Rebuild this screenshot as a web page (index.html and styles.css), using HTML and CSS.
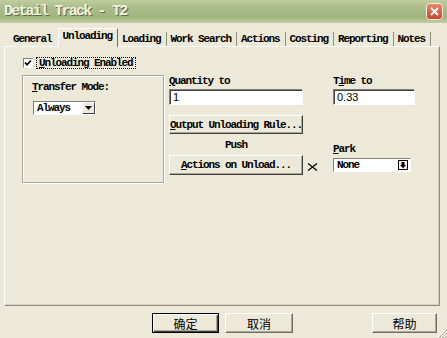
FILE: index.html
```html
<!DOCTYPE html>
<html lang="en">
<head>
    <meta charset="UTF-8">
    <title>Detail Track - T2</title>
    <link rel="stylesheet" href="styles.css">
</head>
<body>
    <div class="titlebar">
        <span class="title">Detail Track - T2</span>
        <svg class="close" width="17" height="17" viewBox="0 0 17 17">
            <defs>
                <linearGradient id="closeGrad" x1="0" y1="0" x2="0" y2="1">
                    <stop offset="0" stop-color="#e98a6b"/>
                    <stop offset="1" stop-color="#c9442b"/>
                </linearGradient>
            </defs>
            <rect x="0.5" y="0.5" width="16" height="16" rx="3" fill="url(#closeGrad)" stroke="#f1eee2"/>
            <path d="M5 5 L12 12 M12 5 L5 12" stroke="#fff" stroke-width="2"/>
        </svg>
    </div>
    <div class="client">
        <div class="tabs">
            <span class="tab first">General</span>
            <span class="tab active">Unloading</span>
            <span class="tab">Loading</span>
            <span class="tab">Work Search</span>
            <span class="tab">Actions</span>
            <span class="tab">Costing</span>
            <span class="tab">Reporting</span>
            <span class="tab">Notes</span>
        </div>
        <div class="panel">
            <div class="check-row">
                <span class="checkbox">
                    <svg width="8" height="8" viewBox="0 0 8 8"><path d="M1 3.5 L3 5.8 L7 1.5" fill="none" stroke="#000" stroke-width="1.7"/></svg>
                </span>
                <span class="focus"><u>U</u>nloading Enabled</span>
            </div>
            <div class="main">
                <div class="group">
                    <div class="label"><u>T</u>ransfer Mode:</div>
                    <div class="combo">
                        <span class="combo-text">Always</span>
                        <span class="combo-btn">
                            <svg width="7" height="4" viewBox="0 0 7 4"><path d="M0 0 H7 L3.5 4 Z" fill="#000"/></svg>
                        </span>
                    </div>
                </div>
                <div class="fields">
                    <div class="label"><u>Q</u>uantity to</div>
                    <div></div>
                    <div class="label">T<u>i</u>me to</div>

                    <div class="input">1</div>
                    <div></div>
                    <div class="input">0.33</div>

                    <button class="btn rule"><u>O</u>utput Unloading Rule...</button>
                    <div></div>
                    <div></div>

                    <div class="label push">Push</div>
                    <div></div>
                    <div class="label park"><u>P</u>ark</div>

                    <button class="btn unload"><u>A</u>ctions on Unload...</button>
                    <svg class="clear" width="11" height="8" viewBox="0 0 11 8"><path d="M1 0.5 L10 7.5 M10 0.5 L1 7.5" stroke="#000" stroke-width="1.2"/></svg>
                    <div class="select">
                        <span class="combo-text">None</span>
                        <svg class="select-icon" width="10" height="10" viewBox="0 0 10 10">
                            <rect x="0.5" y="0.5" width="9" height="9" fill="#f4f2ea" stroke="#000"/>
                            <path d="M3.5 2 H6.5 V5 H8 L5 8.2 L2 5 H3.5 Z" fill="#000"/>
                        </svg>
                    </div>
                </div>
            </div>
        </div>
        <div class="actions">
            <button class="btn cjk default">确定</button>
            <button class="btn cjk">取消</button>
            <button class="btn cjk help">帮助</button>
        </div>
    </div>
    <svg class="grip" width="11" height="11" viewBox="0 0 11 11">
        <path d="M10 2 L2 10 M10 5 L5 10 M10 8 L8 10" stroke="#fff" stroke-width="1"/>
        <path d="M11 3 L3 11 M11 6 L6 11 M11 9 L9 11" stroke="#aca899" stroke-width="1"/>
    </svg>
</body>
</html>
```

FILE: styles.css
```css
body {
    margin: 0;
    width: 447px;
    height: 338px;
    overflow: hidden;
    position: relative;
    background-color: #ece9d8;
    font: bold 11px "Liberation Mono", monospace;
    letter-spacing: -1.1px;
    color: #000;
}
.titlebar {
    height: 23px;
    box-sizing: border-box;
    display: flex;
    align-items: center;
    justify-content: space-between;
    padding: 0 4px 0 4px;
    background: linear-gradient(#bfcd9f, #aabd89 35%, #a0b57d 75%, #c3cfa7);
}
.title {
    font: bold 15px "Liberation Mono", monospace;
    letter-spacing: -1.8px;
    color: #f3f1de;
    text-shadow: 1px 1px 0 #5d6c44;
}
.client {
    padding: 4px 7px 0 4px;
}
.tabs {
    display: flex;
    align-items: flex-end;
    height: 19px;
    padding-left: 6px;
}
.tab {
    height: 14px;
    line-height: 14px;
    padding: 0 5px 0 4px;
    border-right: 1px solid #8f8d80;
    white-space: nowrap;
}
.tab.first {
    border-right: none;
    padding: 0 6px 0 3px;
}
.tab.active {
    height: 19px;
    line-height: 14px;
    box-sizing: border-box;
    padding: 0 5px 0 4px;
    margin-bottom: -1px;
    border-left: 1px solid #fff;
    border-top: 1px solid #fff;
    border-right: 1px solid #716f64;
    background-color: #ece9d8;
    position: relative;
    z-index: 1;
}
.panel {
    width: 436px;
    height: 260px;
    box-sizing: border-box;
    border: 1px solid;
    border-color: #fff #8f8d80 #8f8d80 #fff;
    box-shadow: inset -1px -1px 0 #d6d2c2;
    padding: 10px 0 0 17px;
}
.check-row {
    display: flex;
    align-items: center;
    height: 11px;
}
.checkbox {
    width: 10px;
    height: 10px;
    box-sizing: border-box;
    margin-left: 1px;
    border: 1px solid;
    border-color: #808080 #fff #fff #808080;
    background-color: #fff;
    display: flex;
    align-items: center;
    justify-content: center;
}
.focus {
    margin-left: 4px;
    padding: 0 2px;
    line-height: 10px;
    outline: 1px dotted #000;
}
.main {
    display: flex;
    margin-top: 7px;
}
.group {
    width: 142px;
    height: 108px;
    box-sizing: border-box;
    border: 1px solid #aca899;
    box-shadow: inset 1px 1px 0 #fff, 1px 1px 0 #fff;
    padding: 5px 0 0 9px;
}
.label {
    line-height: 12px;
    height: 12px;
    white-space: nowrap;
}
.combo {
    margin: 8px 0 0 1px;
    width: 63px;
    height: 14px;
    box-sizing: border-box;
    display: flex;
    align-items: center;
    justify-content: space-between;
    border: 1px solid;
    border-color: #808080 #fff #fff #808080;
    background-color: #fff;
}
.combo-text {
    padding-left: 3px;
    line-height: 12px;
}
.combo-btn {
    width: 13px;
    height: 12px;
    box-sizing: border-box;
    display: flex;
    align-items: center;
    justify-content: center;
    background-color: #ece9d8;
    border: 1px solid;
    border-color: #fff #404040 #404040 #fff;
}
.fields {
    display: grid;
    grid-template-columns: 134px 30px 82px;
    margin-left: 5px;
    align-content: start;
}
.input {
    margin-top: 2px;
    height: 16px;
    box-sizing: border-box;
    border: 1px solid;
    border-color: #808080 #fff #fff #808080;
    box-shadow: inset 1px 1px 0 #404040;
    background-color: #fff;
    padding: 1px 0 0 3px;
    font: 11px "Liberation Sans", sans-serif;
    letter-spacing: 0;
    line-height: 13px;
}
.btn {
    font: inherit;
    letter-spacing: inherit;
    white-space: nowrap;
    color: #000;
    background-color: #ece9d8;
    border: 1px solid;
    border-color: #fff #404040 #404040 #fff;
    box-shadow: inset -1px -1px 0 #aca899;
    padding: 0;
    margin: 0;
}
.btn.rule {
    margin-top: 10px;
    height: 19px;
}
.push {
    margin-top: 5px;
    text-align: center;
}
.park {
    margin-top: 9px;
}
.btn.unload {
    height: 20px;
}
.clear {
    align-self: center;
    margin: 4px 0 0 4px;
}
.select {
    align-self: center;
    width: 78px;
    height: 14px;
    box-sizing: border-box;
    display: flex;
    align-items: center;
    justify-content: space-between;
    padding-right: 2px;
    border: 1px solid;
    border-color: #808080 #fff #fff #808080;
    background-color: #fff;
}
.actions {
    display: flex;
    padding: 7px 3px 0 148px;
}
.btn.cjk {
    width: 68px;
    height: 20px;
    font: 12px "Noto Sans CJK SC", sans-serif;
    letter-spacing: 0;
    border-color: #fff #716f64 #716f64 #fff;
}
.btn.default {
    width: 67px;
    margin-right: 6px;
    border: 1px solid #000;
    box-shadow: inset 1px 1px 0 #fff, inset -1px -1px 0 #404040, inset -2px -2px 0 #aca899;
}
.btn.help {
    width: 65px;
    margin-left: auto;
}
.grip {
    position: absolute;
    right: 0;
    bottom: 0;
}
```
